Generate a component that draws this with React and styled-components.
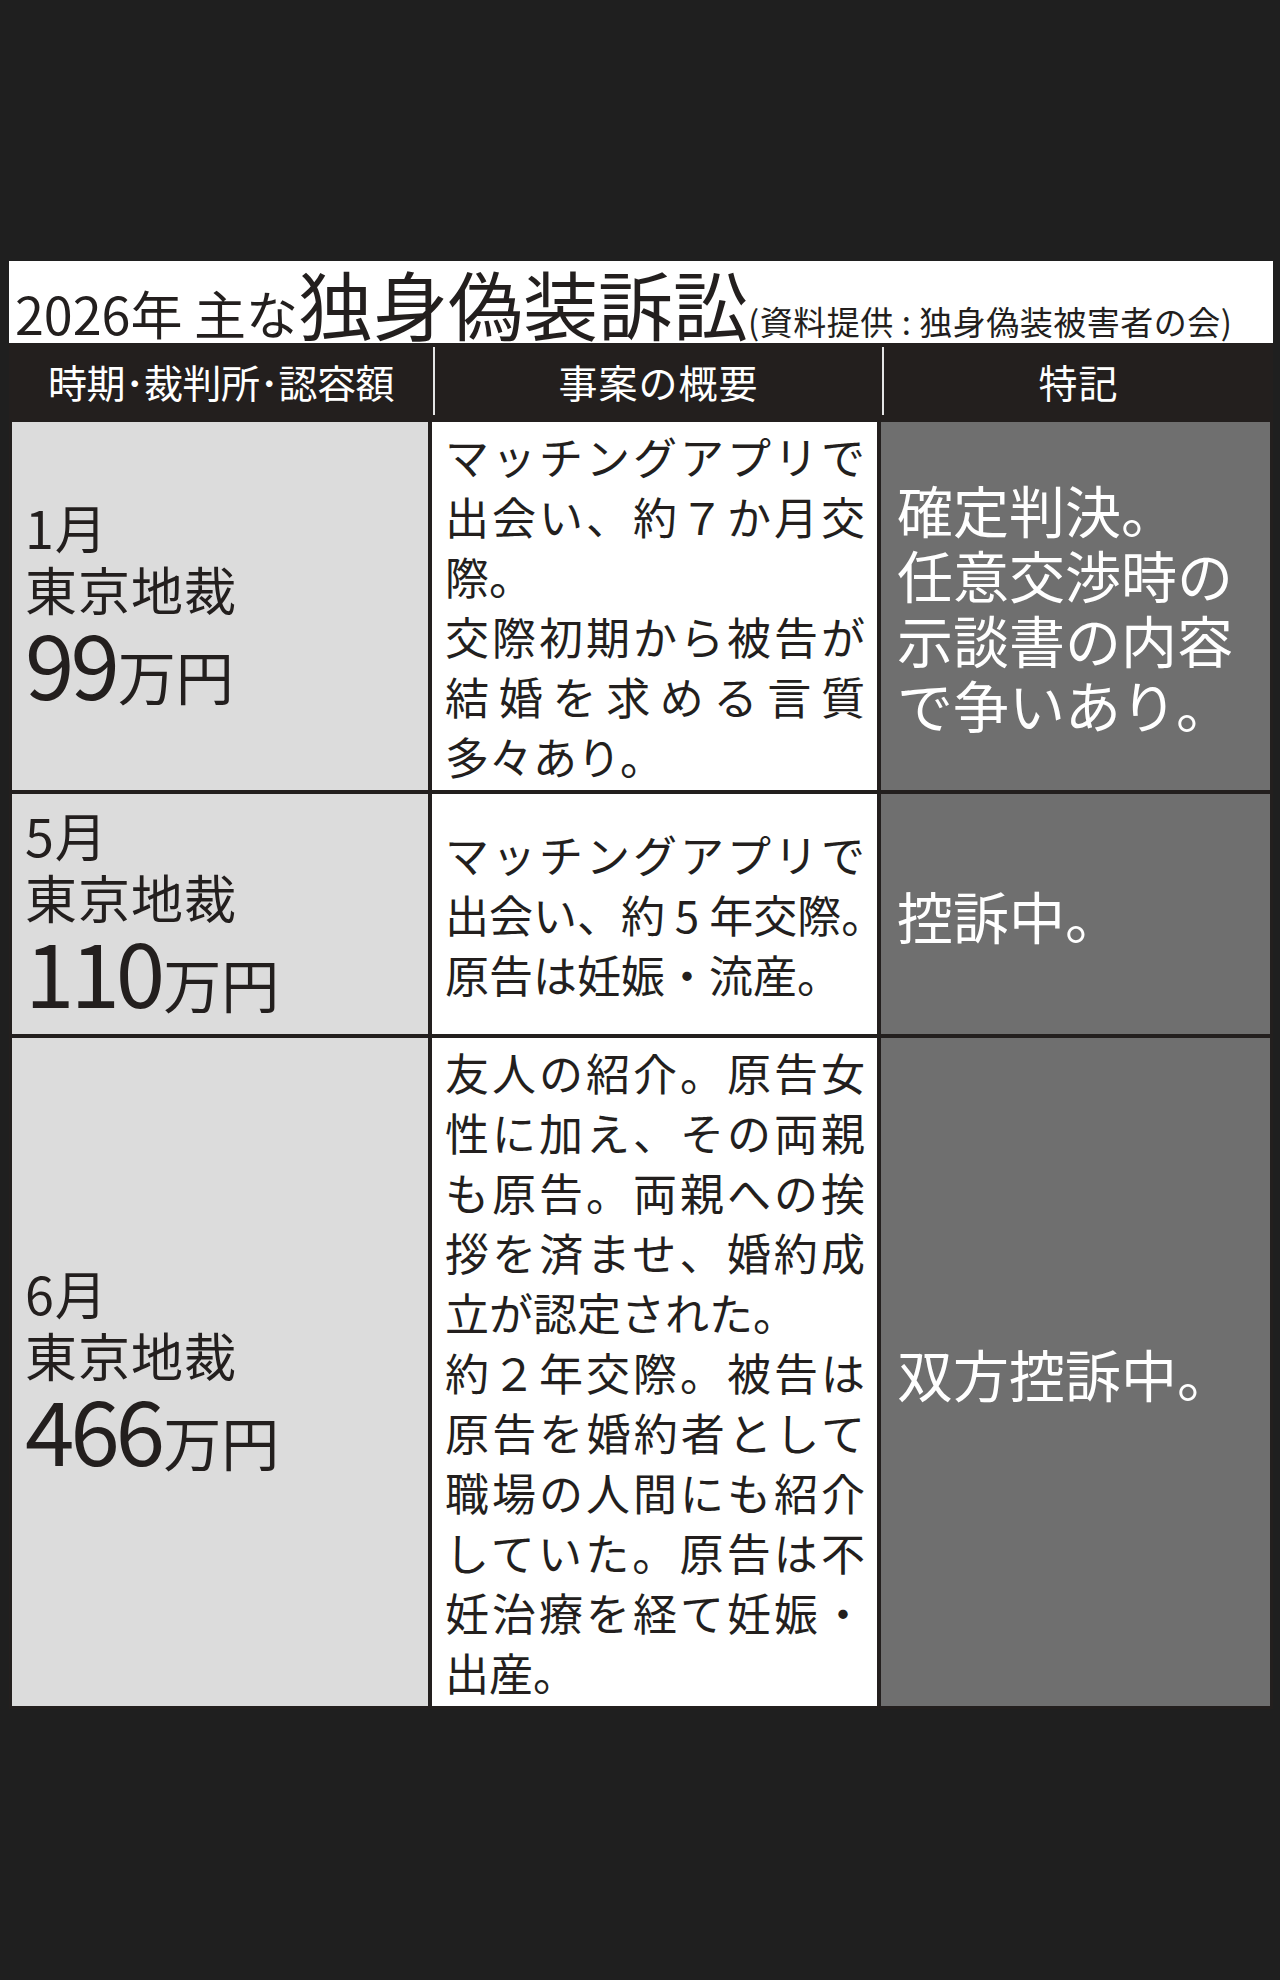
import React from "react";
import styled, { createGlobalStyle } from "styled-components";

const GlobalStyle = createGlobalStyle`
  html, body {
    margin: 0;
    padding: 0;
    background: #1f1f1f;
  }
  body {
    font-family: "Noto Sans CJK JP", "Noto Sans", sans-serif;
  }
`;

const Page = styled.div`
  min-height: 1980px;
  box-sizing: border-box;
  padding: 261px 0 0 9px;
`;

const Table = styled.div`
  width: 1264px;
  background: #231f1e;
  padding-bottom: 3px;
`;

const Caption = styled.div`
  display: flex;
  align-items: baseline;
  height: 82px;
  box-sizing: border-box;
  padding: 4px 0 0 6px;
  background: #fff;
  color: #231f1e;
  white-space: nowrap;
`;

const CaptionPart = styled.span`
  font-size: ${({ size }) => size}px;
  line-height: 1;
  letter-spacing: ${({ spacing }) => spacing || 0}px;
`;

const HeadRow = styled.div`
  display: grid;
  grid-template-columns: 424px 449px 391px;
  height: 76px;
`;

const HeadCell = styled.div`
  display: flex;
  align-items: center;
  justify-content: center;
  box-sizing: border-box;
  color: #fff;
  font-size: 39px;
  letter-spacing: ${({ first }) => (first ? "-0.5px" : "1px")};
  border-left: ${({ first }) => (first ? "none" : "2px solid #e4e4e4")};
  margin: ${({ first }) => (first ? "0" : "4px 0")};
`;

const Body = styled.div`
  display: grid;
  grid-template-columns: 416px 445px 389px;
  column-gap: 4px;
  row-gap: 4px;
  padding: 3px 3px 0 3px;
`;

const Cell = styled.div`
  display: flex;
  flex-direction: column;
  justify-content: center;
  box-sizing: border-box;
  background: ${({ tone }) =>
    tone === "light" ? "#dcdcdc" : tone === "dark" ? "#6f6f6f" : "#fff"};
  color: ${({ tone }) => (tone === "dark" ? "#fff" : "#231f1e")};
  padding: ${({ tone }) =>
    tone === "light"
      ? "10px 8px 22px 13px"
      : tone === "dark"
      ? "0 8px 0 16px"
      : "4px 12px 4px 13px"};
`;

const Small = styled.div`
  font-size: 52px;
  line-height: 62px;
  height: 62px;
  letter-spacing: 1px;
`;

const Amount = styled.div`
  display: flex;
  align-items: baseline;
  line-height: 84px;
  height: 84px;
`;

const Figure = styled.span`
  font-size: 89px;
  letter-spacing: -4px;
`;

const Unit = styled.span`
  font-size: 58px;
  margin-left: 2px;
`;

const Line = styled.div`
  font-size: 44px;
  line-height: 60px;
  white-space: nowrap;
  text-align: ${({ full }) => (full ? "justify" : "left")};
  text-align-last: ${({ full }) => (full ? "justify" : "left")};
`;

const Note = styled.div`
  font-size: 56px;
  line-height: 65px;
  white-space: nowrap;
`;

const rows = [
  {
    month: "1月",
    court: "東京地裁",
    figure: "99",
    lines: [
      ["マッチングアプリで", true],
      ["出会い、約７か月交", true],
      ["際。", false],
      ["交際初期から被告が", true],
      ["結婚を求める言質", true],
      ["多々あり。", false],
    ],
    notes: ["確定判決。", "任意交渉時の", "示談書の内容", "で争いあり。"],
  },
  {
    month: "5月",
    court: "東京地裁",
    figure: "110",
    lines: [
      ["マッチングアプリで", true],
      ["出会い、約 5 年交際。", true],
      ["原告は妊娠・流産。", false],
    ],
    notes: ["控訴中。"],
  },
  {
    month: "6月",
    court: "東京地裁",
    figure: "466",
    lines: [
      ["友人の紹介。原告女", true],
      ["性に加え、その両親", true],
      ["も原告。両親への挨", true],
      ["拶を済ませ、婚約成", true],
      ["立が認定された。", false],
      ["約２年交際。被告は", true],
      ["原告を婚約者として", true],
      ["職場の人間にも紹介", true],
      ["していた。原告は不", true],
      ["妊治療を経て妊娠・", true],
      ["出産。", false],
    ],
    notes: ["双方控訴中。"],
  },
];

export default function App() {
  return (
    <>
      <GlobalStyle />
      <Page>
        <Table>
          <Caption>
            <CaptionPart size={52}>2026年 主な</CaptionPart>
            <CaptionPart size={75}>独身偽装訴訟</CaptionPart>
            <CaptionPart size={33} spacing={0.5}>
              (資料提供 : 独身偽装被害者の会)
            </CaptionPart>
          </Caption>
          <HeadRow>
            <HeadCell first>時期･裁判所･認容額</HeadCell>
            <HeadCell>事案の概要</HeadCell>
            <HeadCell>特記</HeadCell>
          </HeadRow>
          <Body>
            {rows.map((r) => (
              <React.Fragment key={r.month}>
                <Cell tone="light">
                  <Small>{r.month}</Small>
                  <Small>{r.court}</Small>
                  <Amount>
                    <Figure>{r.figure}</Figure>
                    <Unit>万円</Unit>
                  </Amount>
                </Cell>
                <Cell>
                  {r.lines.map(([text, full], i) => (
                    <Line key={i} full={full}>
                      {text}
                    </Line>
                  ))}
                </Cell>
                <Cell tone="dark">
                  {r.notes.map((n) => (
                    <Note key={n}>{n}</Note>
                  ))}
                </Cell>
              </React.Fragment>
            ))}
          </Body>
        </Table>
      </Page>
    </>
  );
}
